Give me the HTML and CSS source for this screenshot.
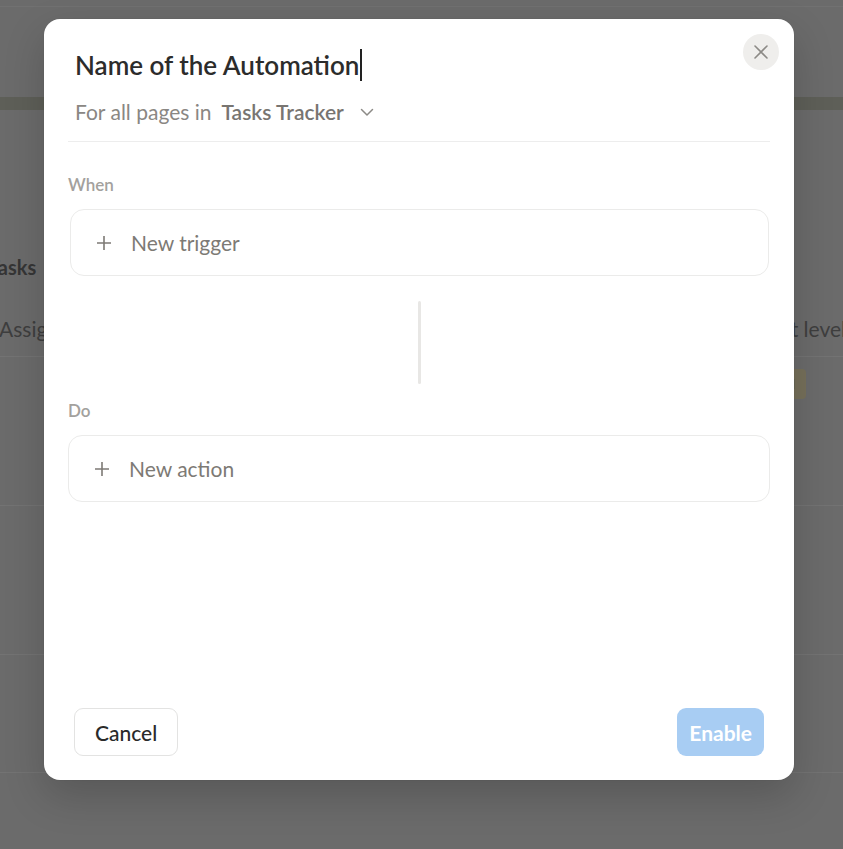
FILE: index.html
```html
<!DOCTYPE html>
<html lang="en">
<head>
<meta charset="utf-8">
<title>Automation</title>
<link rel="stylesheet" href="styles.css">
</head>
<body>
<div class="page">
  <div class="topbar"></div>
  <div class="band"></div>
  <div class="db-title">Tasks</div>
  <div class="db-head">
    <span class="col-left">Assignee</span>
    <span class="col-right">Effort level</span>
  </div>
  <div class="db-row first"><span class="tag">Med</span></div>
  <div class="db-row"></div>
  <div class="db-row last"></div>
</div>

<div class="modal">
  <button class="close" aria-label="Close">
    <svg width="16" height="16" viewBox="0 0 16 16"><path d="M2 2L14 14M14 2L2 14" stroke="#8c8a86" stroke-width="1.6" fill="none" stroke-linecap="round"/></svg>
  </button>
  <div class="header">
    <div class="title">Name of the Automation<span class="caret"></span></div>
    <div class="scope">
      <span class="scope-label">For all pages in</span>
      <span class="scope-db">Tasks Tracker</span>
      <svg class="chev" width="14" height="9" viewBox="0 0 14 9"><path d="M1.5 1.5L7 7L12.5 1.5" stroke="#8c8a86" stroke-width="1.5" fill="none" stroke-linecap="round" stroke-linejoin="round"/></svg>
    </div>
  </div>
  <div class="section-label when">When</div>
  <div class="slot trigger">
    <svg class="plus" width="16" height="16" viewBox="0 0 16 16"><path d="M8 1V15M1 8H15" stroke="#7d7a75" stroke-width="1.6" fill="none"/></svg>
    <span>New trigger</span>
  </div>
  <div class="connector"></div>
  <div class="section-label do">Do</div>
  <div class="slot action">
    <svg class="plus" width="16" height="16" viewBox="0 0 16 16"><path d="M8 1V15M1 8H15" stroke="#7d7a75" stroke-width="1.6" fill="none"/></svg>
    <span>New action</span>
  </div>
  <div class="footer">
    <button class="btn cancel">Cancel</button>
    <button class="btn enable">Enable</button>
  </div>
</div>
</body>
</html>
```

FILE: styles.css
```css
* { box-sizing: border-box; }
html, body { margin: 0; padding: 0; }
body {
  width: 843px;
  height: 849px;
  overflow: hidden;
  background: #6b6b6b;
  font-family: Lato, "Noto Sans", sans-serif;
  position: relative;
}

/* dimmed page behind the modal */
.page { width: 843px; height: 849px; overflow: hidden; }
.topbar { height: 91px; margin-top: 6px; border-top: 1px solid #717171; }
.band { height: 13px; background: #5e5f58; }
.db-title {
  margin: 145px 0 0 -12px;
  height: 24px;
  line-height: 24px;
  font-size: 20px;
  font-weight: 700;
  color: #353535;
}
.db-head {
  height: 78px;
  display: flex;
  justify-content: space-between;
  align-items: flex-end;
  padding-bottom: 15px;
  font-size: 21px;
  line-height: 24px;
  color: #3e3e3e;
  border-bottom: 1px solid #737373;
  white-space: nowrap;
}
.col-left { margin-left: -1px; }
.col-right { margin-right: -3px; }
.db-row {
  height: 149px;
  border-bottom: 1px solid #737373;
  display: flex;
  justify-content: flex-end;
  align-items: flex-start;
}
.db-row.last { height: 118px; }
.tag {
  margin: 12px 37px 0 0;
  width: 50px;
  height: 30px;
  border-radius: 4px;
  background: #76705a;
  color: #5f5128;
  font-size: 14px;
  line-height: 30px;
  text-align: center;
}

/* modal */
.modal {
  position: absolute;
  left: 44px;
  top: 19px;
  width: 750px;
  height: 761px;
  background: #fff;
  border-radius: 16px;
  box-shadow: 0 16px 40px rgba(0,0,0,0.18), 0 0 0 1px rgba(0,0,0,0.02);
  display: flex;
  flex-direction: column;
  padding: 0 24px 24px;
}
.close {
  position: absolute;
  top: 15px;
  right: 15px;
  width: 36px;
  height: 36px;
  border-radius: 50%;
  border: none;
  background: #efeeec;
  display: flex;
  align-items: center;
  justify-content: center;
  padding: 0;
}
.header {
  border-bottom: 1px solid #ededed;
  padding: 30px 0 15px 7px;
}
.title {
  font-size: 26px;
  line-height: 32px;
  font-weight: 600;
  color: #2c2c2b;
  display: flex;
  align-items: center;
}
.caret {
  display: inline-block;
  width: 2px;
  height: 32px;
  background: #222;
  margin-left: 1px;
}
.scope {
  margin-top: 17px;
  display: flex;
  align-items: center;
  font-size: 21px;
  line-height: 28px;
}
.scope-label { color: #8a8783; }
.scope-db { color: #787571; font-weight: 600; margin-left: 10px; }
.chev { margin-left: 16px; }

.section-label {
  font-size: 17px;
  line-height: 20px;
  font-weight: 600;
  color: #a3a19d;
}
.when { margin-top: 33px; }
.do { margin-top: 17px; }

.slot {
  height: 67px;
  border: 1px solid #ebebea;
  border-radius: 14px;
  display: flex;
  align-items: center;
  font-size: 21px;
  color: #7d7a75;
}
.trigger { margin: 14px 1px 0 2px; padding-left: 25px; }
.action { margin-top: 14px; padding-left: 25px; }
.plus { margin-right: 19px; }

.connector {
  align-self: center;
  width: 3px;
  height: 83px;
  margin-top: 25px;
  background: #e8e7e5;
  border-radius: 2px;
}

.footer {
  margin-top: auto;
  display: flex;
  justify-content: space-between;
  padding: 0 6px;
}
.btn {
  height: 48px;
  border-radius: 9px;
  font-family: Lato, "Noto Sans", sans-serif;
  font-size: 21px;
}
.cancel {
  background: #fff;
  border: 1px solid #e3e3e2;
  color: #2a2a2a;
  font-weight: 500;
  padding: 0 20px;
}
.enable {
  background: #a8cdf3;
  border: none;
  color: #fff;
  font-weight: 700;
  padding: 0 12px;
}
```
